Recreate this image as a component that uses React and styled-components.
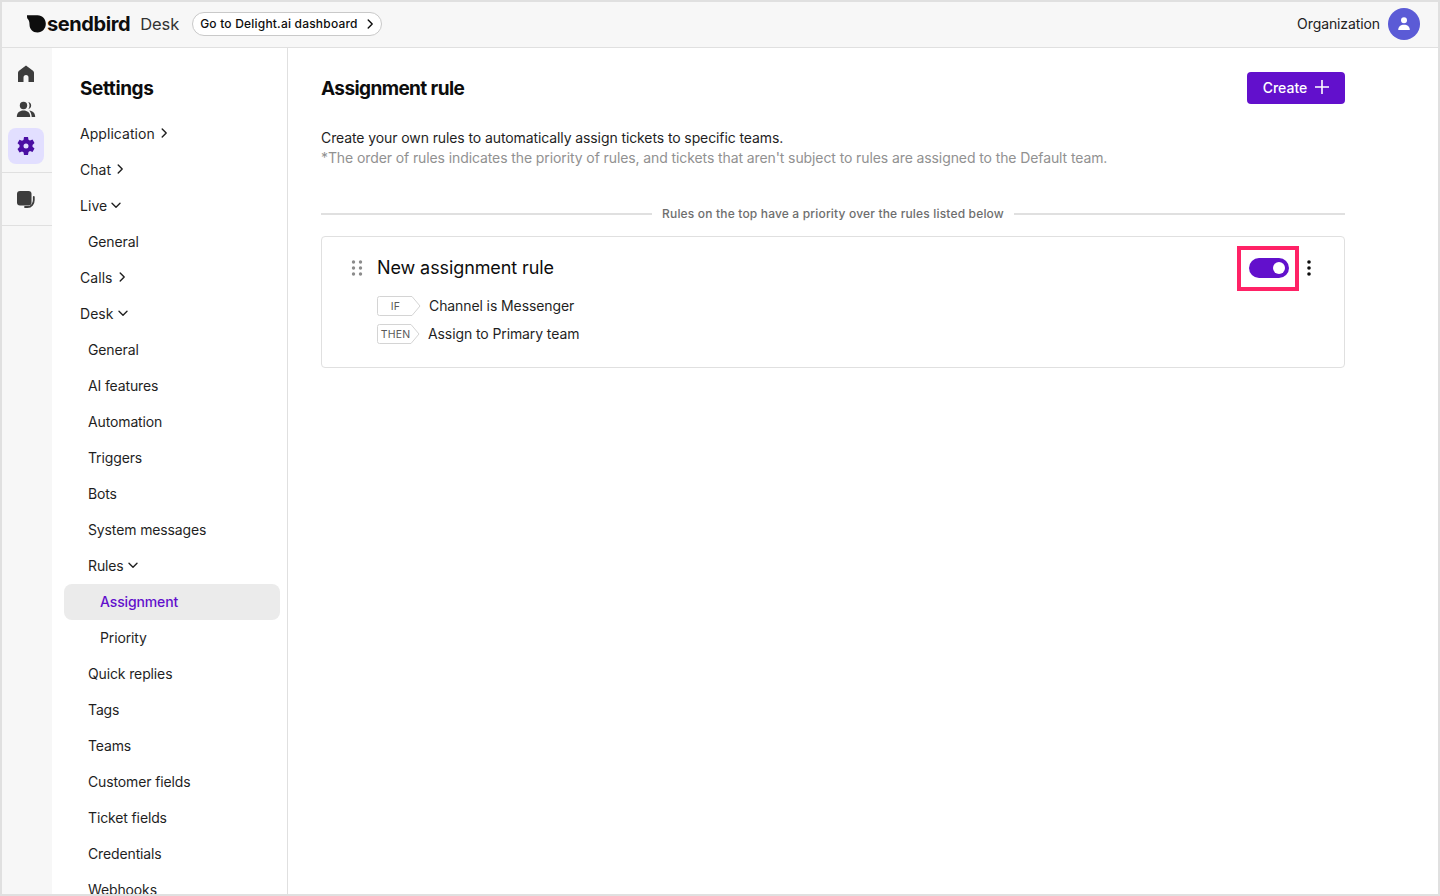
import React from 'react'
import styled, { createGlobalStyle } from 'styled-components'

const GlobalStyle = createGlobalStyle`
  html, body { margin: 0; padding: 0; background: #fff; }
  body { font-family: Inter, "Liberation Sans", sans-serif; color: #0d0d0d; overflow: hidden; letter-spacing: -0.1px; }
  * { box-sizing: border-box; }
`

const navItems = [
  { label: 'Application', level: 0, arrow: 'right' },
  { label: 'Chat', level: 0, arrow: 'right' },
  { label: 'Live', level: 0, arrow: 'down' },
  { label: 'General', level: 1 },
  { label: 'Calls', level: 0, arrow: 'right' },
  { label: 'Desk', level: 0, arrow: 'down' },
  { label: 'General', level: 1 },
  { label: 'AI features', level: 1 },
  { label: 'Automation', level: 1 },
  { label: 'Triggers', level: 1 },
  { label: 'Bots', level: 1 },
  { label: 'System messages', level: 1 },
  { label: 'Rules', level: 1, arrow: 'down' },
  { label: 'Assignment', level: 2, active: true },
  { label: 'Priority', level: 2 },
  { label: 'Quick replies', level: 1 },
  { label: 'Tags', level: 1 },
  { label: 'Teams', level: 1 },
  { label: 'Customer fields', level: 1 },
  { label: 'Ticket fields', level: 1 },
  { label: 'Credentials', level: 1 },
  { label: 'Webhooks', level: 1 },
]

const Chevron = ({ dir, size = 12 }) => (
  <svg width={size} height={size} viewBox="0 0 12 12" fill="none" stroke="currentColor" strokeWidth="1.4" strokeLinecap="round" strokeLinejoin="round">
    {dir === 'right' ? <path d="M4.200 2l4 4-4 4" /> : <path d="M2 4.200l4 4 4-4" />}
  </svg>
)

const Logo = () => (
  <svg width="20" height="18" viewBox="0 0 20 18">
    <path d="M0 .2h10.500C15.500 .2 18.800 4 18.800 8.800s-3.500 8.700-8.300 8.700C5.800 17.500 2.500 14 2.500 9.500 2.500 6.800 1.800 5.200.6 3.800 0 3 0 1.500 0 .2z" fill="#0d0d0d" />
  </svg>
)

const HomeIcon = () => (
  <svg width="20" height="20" viewBox="0 0 20 20">
    <path d="M10 1.500l7 5.300c.7.500 1 1.200 1 2V18h-5.500v-4.500a2.500 2.500 0 0 0-5 0V18H2V8.800c0-.8.300-1.500 1-2z" fill="#3d3d3d" />
  </svg>
)

const PeopleIcon = () => (
  <svg width="20" height="20" viewBox="0 0 20 20" fill="#3d3d3d">
    <circle cx="7.500" cy="5.500" r="3.700" />
    <path d="M.8 17c0-4.300 2.800-6.400 6.700-6.400s6.700 2.100 6.700 6.400z" />
    <path d="M12.300 2a3.700 3.700 0 0 1 0 7.200c.8-1 1.200-2.300 1.200-3.600s-.4-2.600-1.200-3.600z" />
    <path d="M13.200 10.500c3.800.5 6 2.600 6 6.500h-3.500c0-2.600-1-4.800-2.500-6.500z" />
  </svg>
)

const GearIcon = () => (
  <svg width="20" height="20" viewBox="0 0 20 20">
    <path
      fillRule="evenodd"
      fill="#4a0fa3"
      d="M8 1h4l.5 2.700 1.500.8 2.500-.9 2 3.500-2 1.800v1.800l2 1.800-2 3.500-2.500-.9-1.500.8L12 19H8l-.5-2.700-1.500-.8-2.500.9-2-3.500 2-1.800V9.100l-2-1.800 2-3.500 2.500.9 1.500-.8zM10 7.500a2.500 2.500 0 1 0 0 5 2.500 2.500 0 0 0 0-5z"
    />
  </svg>
)

const DeskIcon = () => (
  <svg width="20" height="20" viewBox="0 0 20 20" fill="none">
    <rect x="1" y="2" width="14.500" height="14.500" rx="3" fill="#3d3d3d" />
    <path d="M17.800 8v3c0 3.500-2.300 7-6.300 7H9" stroke="#3d3d3d" strokeWidth="1.800" strokeLinecap="round" />
  </svg>
)

const UserIcon = () => (
  <svg width="18" height="18" viewBox="0 0 18 18" fill="#fff">
    <circle cx="9" cy="5.200" r="3" />
    <path d="M3.200 15c0-3.400 2.400-5.300 5.800-5.300s5.800 1.900 5.800 5.300z" />
  </svg>
)

const PlusIcon = () => (
  <svg width="14" height="14" viewBox="0 0 14 14" stroke="#fff" strokeWidth="1.600">
    <path d="M7 0v14M0 7h14" />
  </svg>
)

const DragIcon = () => (
  <svg width="12" height="16" viewBox="0 0 12 16" fill="#8c8c8c">
    {[2, 8, 14].map(y => [2.500, 9.500].map(x => <circle key={`${x}-${y}`} cx={x} cy={y} r="1.700" />))}
  </svg>
)

const MoreIcon = () => (
  <MoreSvg width="4" height="16" viewBox="0 0 4 16" fill="#0d0d0d">
    <circle cx="2" cy="2" r="1.800" />
    <circle cx="2" cy="8" r="1.800" />
    <circle cx="2" cy="14" r="1.800" />
  </MoreSvg>
)

const TagShape = ({ width }) => (
  <TagSvg width={width} height="20" viewBox={`0 0 ${width} 20`} fill="none">
    <path d={`M2.500.5H${width - 9}L${width - 1} 10 ${width - 9} 19.500H2.500a2 2 0 0 1-2-2v-15a2 2 0 0 1 2-2z`} stroke="#d4d4d4" fill="#fff" />
  </TagSvg>
)

export default function App() {
  return (
    <Frame>
      <GlobalStyle />
      <Header>
        <Brand>
          <Logo />
          <BrandName>sendbird</BrandName>
          <Product>Desk</Product>
          <DashboardLink>
            Go to Delight.ai dashboard
            <Chevron dir="right" />
          </DashboardLink>
        </Brand>
        <Account>
          <AccountName>Organization</AccountName>
          <Avatar><UserIcon /></Avatar>
        </Account>
      </Header>
      <Body>
        <Rail>
          <RailGroup>
            <RailButton><HomeIcon /></RailButton>
            <RailButton><PeopleIcon /></RailButton>
            <RailButton $active><GearIcon /></RailButton>
          </RailGroup>
          <RailGroup>
            <RailButton><DeskIcon /></RailButton>
          </RailGroup>
        </Rail>
        <Sidebar>
          <SidebarTitle>Settings</SidebarTitle>
          <Nav>
            {navItems.map((item, i) => (
              <NavItem key={i} $level={item.level} $active={item.active}>
                {item.label}
                {item.arrow && <Chevron dir={item.arrow} />}
              </NavItem>
            ))}
          </Nav>
        </Sidebar>
        <Main>
          <TitleRow>
            <PageTitle>Assignment rule</PageTitle>
            <CreateButton>Create <PlusIcon /></CreateButton>
          </TitleRow>
          <Description>
            Create your own rules to automatically assign tickets to specific teams.
            <Note>*The order of rules indicates the priority of rules, and tickets that aren't subject to rules are assigned to the Default team.</Note>
          </Description>
          <Divider><span>Rules on the top have a priority over the rules listed below</span></Divider>
          <RuleCard>
            <RuleHead>
              <RuleName>
                <DragIcon />
                New assignment rule
              </RuleName>
              <RuleActions>
                <Highlight>
                  <Toggle><Knob /></Toggle>
                </Highlight>
                <MoreIcon />
              </RuleActions>
            </RuleHead>
            <Condition>
              <Tag $width={44} $pad={7}><TagShape width={44} /><TagLabel>IF</TagLabel></Tag>
              <ConditionText $gap={8}>Channel is Messenger</ConditionText>
            </Condition>
            <Condition>
              <Tag $width={43} $pad={6}><TagShape width={43} /><TagLabel>THEN</TagLabel></Tag>
              <ConditionText $gap={8}>Assign to Primary team</ConditionText>
            </Condition>
          </RuleCard>
        </Main>
      </Body>
    </Frame>
  )
}

const Frame = styled.div`
  width: 1440px;
  height: 896px;
  border: 2px solid #e0e0e0;
  background: #fff;
  display: flex;
  flex-direction: column;
  overflow: hidden;
`

const Header = styled.header`
  height: 46px;
  flex: none;
  display: flex;
  align-items: center;
  justify-content: space-between;
  padding: 0 18px 1px 25px;
  background: #f7f7f7;
  border-bottom: 1px solid #e0e0e0;
`

const Brand = styled.div`
  display: flex;
  align-items: center;
`

const BrandName = styled.span`
  font-size: 20px;
  font-weight: 700;
  letter-spacing: -0.4px;
`

const Product = styled.span`
  font-size: 16.500px;
  color: #333;
  margin-left: 10px;
`

const DashboardLink = styled.a`
  display: flex;
  align-items: center;
  justify-content: space-between;
  width: 190px;
  height: 24px;
  margin-left: 13px;
  padding: 0 5px 1px 7px;
  background: #fff;
  border: 1px solid #c9c9c9;
  border-radius: 12px;
  font-size: 12px;
  font-weight: 500;
  letter-spacing: 0.2px;
`

const Account = styled.div`
  display: flex;
  align-items: center;
  gap: 8px;
  font-size: 14px;
  color: #222;
`

const AccountName = styled.span`
  padding-bottom: 2px;
`

const Avatar = styled.span`
  width: 32px;
  height: 32px;
  border-radius: 50%;
  background: #5b5bd6;
  display: flex;
  align-items: center;
  justify-content: center;
`

const Body = styled.div`
  flex: 1;
  min-height: 0;
  display: flex;
`

const Rail = styled.nav`
  width: 50px;
  flex: none;
  background: #f7f7f7;
  display: flex;
  flex-direction: column;
`

const RailGroup = styled.div`
  padding: 8px 6px;
  display: flex;
  flex-direction: column;
  border-bottom: 1px solid #e0e0e0;
`

const RailButton = styled.div`
  width: 36px;
  height: 36px;
  border-radius: 8px;
  display: flex;
  align-items: center;
  justify-content: center;
  background: ${({ $active }) => ($active ? '#e2dfff' : 'transparent')};
`

const Sidebar = styled.aside`
  width: 236px;
  flex: none;
  padding: 0 7px 0 12px;
  border-right: 1px solid #e0e0e0;
  overflow: hidden;
`

const SidebarTitle = styled.h2`
  margin: 0;
  height: 68px;
  padding: 13px 0 0 16px;
  display: flex;
  align-items: center;
  font-size: 19px;
  font-weight: 700;
  letter-spacing: -0.4px;
`

const Nav = styled.div`
  display: flex;
  flex-direction: column;
`

const indent = { 0: 16, 1: 24, 2: 36 }

const NavItem = styled.div`
  flex: none;
  height: 36px;
  display: flex;
  align-items: center;
  gap: 3px;
  padding-left: ${({ $level }) => indent[$level]}px;
  padding-bottom: 2px;
  border-radius: 8px;
  font-size: 14px;
  letter-spacing: ${({ $level }) => ($level === 0 ? '0.05px' : '-0.13px')};
  font-weight: ${({ $active }) => ($active ? 500 : 400)};
  color: ${({ $active }) => ($active ? '#6210cc' : '#1f1f1f')};
  background: ${({ $active }) => ($active ? '#ebebeb' : 'transparent')};
`

const Main = styled.main`
  flex: 1;
  padding: 24px 93px 0 33px;
`

const TitleRow = styled.div`
  height: 32px;
  display: flex;
  align-items: center;
  justify-content: space-between;
`

const PageTitle = styled.h1`
  margin: 0;
  font-size: 19px;
  font-weight: 700;
  letter-spacing: -0.6px;
`

const CreateButton = styled.button`
  width: 98px;
  height: 32px;
  border: 0;
  border-radius: 4px;
  background: #6210cc;
  color: #fff;
  font: 500 14px Inter, "Liberation Sans", sans-serif;
  display: flex;
  align-items: center;
  justify-content: center;
  gap: 8px;
  padding: 0 0 2px;
`

const Description = styled.div`
  margin-top: 24px;
  font-size: 14px;
  line-height: 20px;
  color: #1f1f1f;
`

const Note = styled.div`
  color: #919191;
`

const Divider = styled.div`
  margin-top: 36px;
  height: 20px;
  display: flex;
  align-items: center;
  gap: 10px;
  font-size: 12px;
  font-weight: 500;
  letter-spacing: 0.17px;
  color: #6e6e6e;

  &::before,
  &::after {
    content: '';
    flex: 1;
    height: 2px;
    background: #e0e0e0;
  }

  span {
    margin-top: -2px;
  }
`

const RuleCard = styled.section`
  margin-top: 12px;
  height: 132px;
  padding: 9px 33px 0 29px;
  border: 1px solid #e0e0e0;
  border-radius: 4px;
`

const RuleHead = styled.div`
  height: 45px;
  display: flex;
  align-items: center;
  justify-content: space-between;
`

const RuleName = styled.div`
  display: flex;
  align-items: center;
  gap: 14px;
  padding-bottom: 2px;
  font-size: 18px;
  font-weight: 400;
`

const RuleActions = styled.div`
  display: flex;
  align-items: center;
  gap: 8px;
`

const MoreSvg = styled.svg`
  margin-top: -1px;
`

const Highlight = styled.div`
  width: 62px;
  height: 45px;
  border: 4px solid #ff2266;
  padding: 0 0 2px 2px;
  display: flex;
  align-items: center;
  justify-content: center;
`

const Toggle = styled.div`
  width: 40px;
  height: 20px;
  border-radius: 10px;
  background: #6210cc;
  display: flex;
  align-items: center;
  justify-content: flex-end;
  padding-right: 4px;
`

const Knob = styled.span`
  width: 12px;
  height: 12px;
  border-radius: 50%;
  background: #fff;
`

const Condition = styled.div`
  height: 28px;
  margin-left: 26px;
  display: flex;
  align-items: center;
`

const Tag = styled.div`
  position: relative;
  top: 1px;
  width: ${({ $width }) => $width}px;
  height: 20px;
  flex: none;
  display: flex;
  align-items: center;
  justify-content: center;
  padding-right: ${({ $pad }) => $pad}px;
`

const TagSvg = styled.svg`
  position: absolute;
  left: 0;
  top: 0;
`

const TagLabel = styled.span`
  position: relative;
  font-size: 10.500px;
  letter-spacing: 0.2px;
  color: #595959;
`

const ConditionText = styled.span`
  margin-left: ${({ $gap }) => $gap}px;
  font-size: 14px;
  color: #1f1f1f;
`
